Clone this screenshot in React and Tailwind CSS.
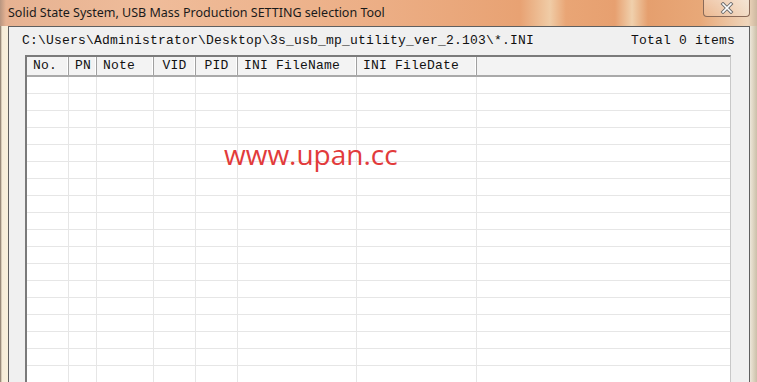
import React from "react";

const cols = [
  { label: "No.", w: "w-[42px]", align: "justify-start pl-[6px]" },
  { label: "PN", w: "w-[28px]", align: "justify-start pl-[6px]" },
  { label: "Note", w: "w-[57px]", align: "justify-start pl-[6px]" },
  { label: "VID", w: "w-[42px]", align: "justify-center" },
  { label: "PID", w: "w-[42px]", align: "justify-center" },
  { label: "INI FileName", w: "w-[119px]", align: "justify-start pl-[6px]" },
  { label: "INI FileDate", w: "w-[120px]", align: "justify-start pl-[6px]" },
];

const rows = Array.from({ length: 19 });

export default function App() {
  return (
    <div className="relative w-[757px] h-[382px] overflow-hidden bg-[linear-gradient(90deg,#7a6a5a_0px,#f6ecd8_2px,#f8f0dc_8px,#f0f0f0_9px,#f0f0f0_748px,#e9e1d2_751px,#cbbfa8_757px)]">
      {/* title bar */}
      <div className="h-[26px] flex items-center pl-[8px] bg-[linear-gradient(90deg,#b89680_0px,#e6b292_6px,#efbc9a_150px,#ecae85_380px,#e8a273_520px,#f0cca6_550px,#e9a575_566px,#e7a070_615px,#f0d0ac_632px,#e59f6e_648px,#e8a878_700px,#efd6bc_748px,#cdb8a0_757px)]">
        <span className="text-[12.5px] text-[#1a1a1a] font-['Noto_Sans',sans-serif] leading-none">
          Solid State System, USB Mass Production SETTING selection Tool
        </span>
      </div>
      {/* close button */}
      <div className="absolute top-0 right-[7px] w-[47px] h-[17px] rounded-b-[4px] border border-t-0 border-[#8a6a58] bg-[linear-gradient(180deg,rgba(255,255,255,0.35),rgba(255,255,255,0.15))] flex items-center justify-center">
        <svg width="14" height="12" viewBox="0 0 14 12">
          <path d="M3 2 L11 10 M11 2 L3 10" stroke="#6b6b6b" strokeWidth="3.4" strokeLinecap="square" />
          <path d="M3 2 L11 10 M11 2 L3 10" stroke="#ffffff" strokeWidth="1.6" strokeLinecap="square" />
        </svg>
      </div>
      {/* client area */}
      <div className="ml-[8px] mr-[7px] h-[356px] border-l border-t border-r border-[#5f5f5f] bg-[#f0f0f0] flex flex-col font-['Liberation_Mono',monospace] text-[13px] tracking-[0.2px] text-[#111]">
        <div className="h-[28px] flex items-center justify-between pl-[13px] pr-[14px] shrink-0">
          <span>C:\Users\Administrator\Desktop\3s_usb_mp_utility_ver_2.103\*.INI</span>
          <span>Total 0 items</span>
        </div>
        <div className="ml-[16px] mr-[18px] flex-1 border-l-2 border-t-2 border-l-[#7a7a7a] border-t-[#7a7a7a] border-r border-r-[#c8c8c8] bg-white overflow-hidden">
          <div className="flex h-[20px] bg-[#f3f3f3] border-b-2 border-[#a9a9a9]">
            {cols.map((c) => (
              <div key={c.label} className={`${c.w} shrink-0 flex items-center ${c.align} border-r border-[#a0a0a0] shadow-[inset_-1px_0_0_#ffffff]`}>
                {c.label}
              </div>
            ))}
            <div className="flex-1" />
          </div>
          {rows.map((_, i) => (
            <div key={i} className="flex h-[17px] border-b border-[#e6e6e6]">
              {cols.map((c) => (
                <div key={c.label} className={`${c.w} shrink-0 border-r border-[#e6e6e6]`} />
              ))}
              <div className="flex-1" />
            </div>
          ))}
        </div>
      </div>
      {/* watermark */}
      <div className="absolute left-[224px] top-[140px] text-[28px] leading-none text-[#e23b3b] font-['Open_Sans',sans-serif]">
        www.upan.cc
      </div>
    </div>
  );
}
